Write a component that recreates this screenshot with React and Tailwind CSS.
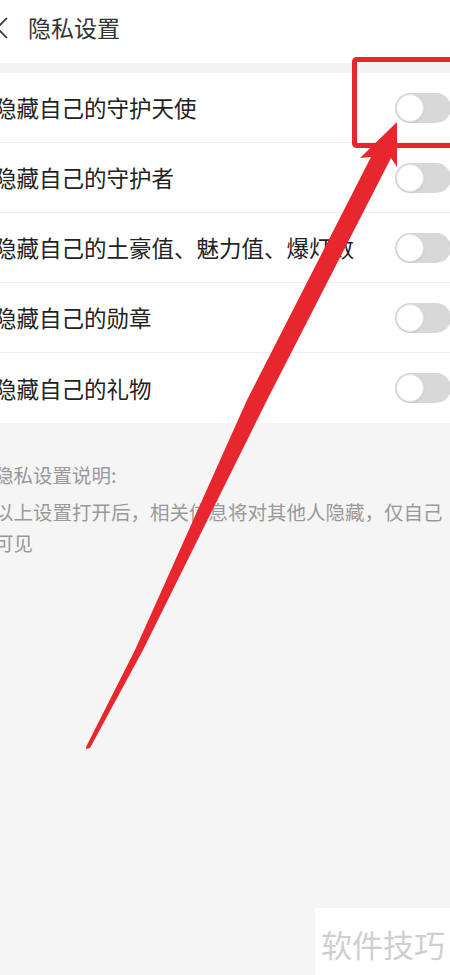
const font = { fontFamily: '"Noto Sans CJK SC", "Noto Sans", sans-serif' };

const items = [
  "隐藏自己的守护天使",
  "隐藏自己的守护者",
  "隐藏自己的土豪值、魅力值、爆灯数",
  "隐藏自己的勋章",
  "隐藏自己的礼物",
];

function Toggle() {
  return (
    <div className="w-[56px] h-[30px] rounded-full bg-[#d8d8d8] flex items-center p-[1px] shrink-0">
      <div className="w-[28px] h-[28px] rounded-full bg-white border border-[#e2e2e2] shadow-[0_1px_2px_rgba(0,0,0,0.08)]" />
    </div>
  );
}

export default function App() {
  return (
    <div className="relative w-[450px] h-[975px] overflow-hidden bg-[#f5f5f5]" style={font}>
      <div className="w-[468px] -ml-[6px] flex flex-col">
        <div className="h-[63px] bg-white flex items-center pb-[8px]">
          <svg width="16" height="24" viewBox="0 0 16 24" className="shrink-0">
            <path d="M13 2 L3 12 L13 22" fill="none" stroke="#333" strokeWidth="1.6" />
          </svg>
          <span className="ml-[18px] text-[23px] text-[#333] leading-none">隐私设置</span>
        </div>
        <div className="h-[10px] bg-[#f4f4f4]" />
        <div className="w-[462px] bg-white flex flex-col">
          {items.map((t, i) => (
            <div
              key={t}
              className={`h-[70px] flex items-center justify-between pr-[5px] ${i < items.length - 1 ? "border-b border-[#eeeeee]" : ""}`}
            >
              <span className="text-[22.5px] text-[#222] leading-none whitespace-nowrap">{t}</span>
              <Toggle />
            </div>
          ))}
        </div>
        <div className="w-[462px] pt-[36px] text-[#999] text-[19.5px]">
          <div className="leading-[31px]">隐私设置说明:</div>
          <div className="mt-[6px] leading-[31px]">
            以上设置打开后，相关信息将对其他人隐藏，仅自己可见
          </div>
        </div>
      </div>

      <div className="absolute left-[315px] top-[908px] w-[140px] h-[70px] bg-white flex items-center pl-[6px]">
        <span className="text-[31px] text-[#cfcfcf] leading-none">软件技巧</span>
      </div>

      <svg className="absolute inset-0" width="450" height="975" viewBox="0 0 450 975">
        <rect x="354.5" y="59.5" width="110" height="86" rx="2" fill="none" stroke="#e8262d" strokeWidth="5" />
        <polygon
          fill="#e8262d"
          points="397,122 397,167 391,158 267,400 143,650 90,748 86,749 86,747 135,650 247,400 371,157 360,158"
        />
      </svg>
    </div>
  );
}
